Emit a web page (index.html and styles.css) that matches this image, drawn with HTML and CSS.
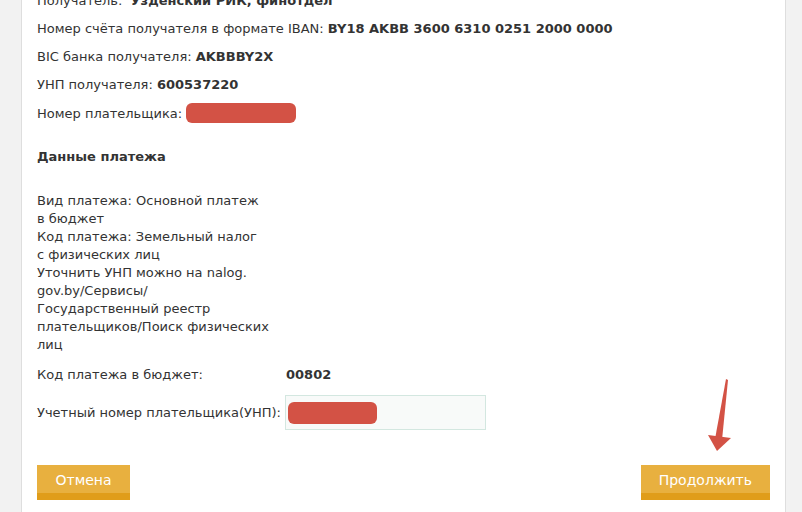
FILE: index.html
```html
<!DOCTYPE html>
<html lang="ru">
<head>
<meta charset="utf-8">
<link rel="stylesheet" href="styles.css">
</head>
<body>
<div class="panel">
  <div class="content">
    <div class="info">
      <div class="row">Получатель: &nbsp;<b>Узденский РИК, финотдел</b></div>
      <div class="row">Номер счёта получателя в формате IBAN: <b>BY18 AKBB 3600 6310 0251 2000 0000</b></div>
      <div class="row">BIC банка получателя: <b>AKBBBY2X</b></div>
      <div class="row">УНП получателя: <b>600537220</b></div>
      <div class="row">Номер плательщика: <span class="redact redact-a"></span></div>
    </div>
    <h3 class="section">Данные платежа</h3>
    <p class="desc">Вид платежа: Основной платеж<br>в бюджет<br>Код платежа: Земельный налог<br>с физических лиц<br>Уточнить УНП можно на nalog.<br>gov.by/Сервисы/<br>Государственный реестр<br>плательщиков/Поиск физических<br>лиц</p>
    <div class="field">
      <span class="label">Код платежа в бюджет:</span>
      <b class="value">00802</b>
    </div>
    <div class="field field-input">
      <span class="label">Учетный номер плательщика(УНП):</span>
      <div class="input"><span class="redact redact-b"></span></div>
    </div>
    <div class="actions">
      <button class="btn btn-cancel">Отмена</button>
      <button class="btn">Продолжить</button>
    </div>
  </div>
  <svg class="arrow" width="40" height="80" viewBox="0 0 40 80">
    <polygon points="25,4 27,5 21,65 14,64" fill="#d35245"/>
    <polygon points="7,60 30,63 16,76" fill="#d35245"/>
  </svg>
</div>
</body>
</html>
```
FILE: styles.css
```css
html, body {
  margin: 0;
  padding: 0;
  height: 100%;
  overflow: hidden;
}
body {
  background: #f2f2f2;
  font-family: "DejaVu Sans", Verdana, sans-serif;
  font-size: 13px;
  color: #333;
}
.panel {
  position: relative;
  display: flow-root;
  margin-left: 21px;
  width: 763px;
  height: 100%;
  background: #fff;
  border-left: 1px solid #dedede;
  border-right: 1px solid #dedede;
}
.content {
  padding: 0 15px;
}
.info {
  margin-top: -8px;
}
.row {
  line-height: 18px;
  height: 18px;
  margin-bottom: 10px;
  white-space: nowrap;
}
.row b {
  font-weight: bold;
}
.redact {
  display: inline-block;
  background: #d35245;
  border-radius: 6px;
  vertical-align: middle;
}
.redact-a {
  width: 110px;
  height: 20px;
  margin-left: 0;
  position: relative;
  top: -1px;
}
.section {
  margin: 26px 0 0;
  font-size: 13px;
  line-height: 18px;
  font-weight: bold;
}
.desc {
  margin: 26px 0 0;
  line-height: 18px;
  white-space: nowrap;
}
.field {
  display: flex;
  align-items: center;
  margin-top: 12px;
  line-height: 18px;
}
.label {
  width: 249px;
  flex: none;
}
.field-input {
  margin-top: 11px;
}
.input {
  width: 197px;
  height: 33px;
  background: #f8faf9;
  border: 1px solid #d3e7e0;
  margin-left: -1px;
  display: flex;
  align-items: center;
  padding-left: 2px;
}
.redact-b {
  width: 89px;
  height: 22px;
}
.actions {
  display: flex;
  justify-content: space-between;
  margin-top: 35px;
}
.btn {
  height: 35px;
  padding: 2px 18px 0;
  border: 0;
  border-bottom: 7px solid #e09d1a;
  background: #e8b03f;
  color: #fff;
  font-family: "DejaVu Sans", Verdana, sans-serif;
  font-size: 14px;
  line-height: 26px;
  box-sizing: border-box;
}
.btn-cancel {
  min-width: 93px;
}
.arrow {
  position: absolute;
  left: 679px;
  top: 375px;
}
```
